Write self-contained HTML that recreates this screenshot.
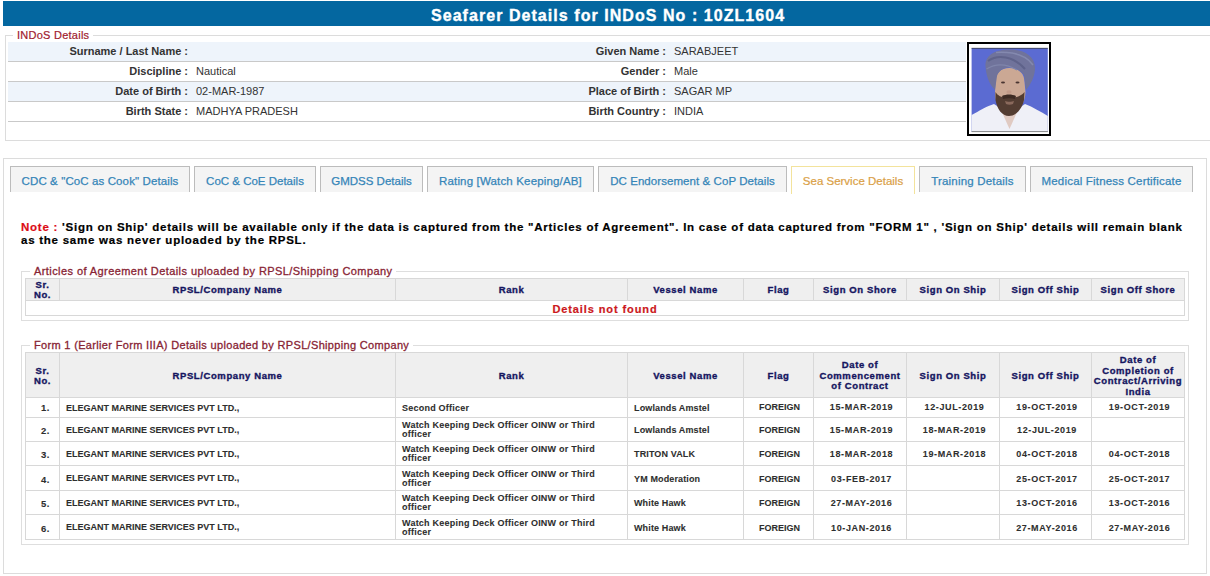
<!DOCTYPE html>
<html><head><meta charset="utf-8">
<style>
html,body{margin:0;padding:0;background:#fff;width:1210px;height:576px;overflow:hidden;position:relative;font-family:"Liberation Sans",sans-serif;}
.abs{position:absolute;}
#hdr{left:3px;top:1px;width:1207px;height:25px;background:#0467a0;}
#hdr span{position:absolute;left:428px;top:4.5px;color:#fff;font:bold 16px/20px "Liberation Sans",sans-serif;letter-spacing:1.05px;-webkit-text-stroke:0.35px #fff;white-space:nowrap;}
#fs1{left:5px;top:35px;width:1220px;height:104px;border:1px solid #dcdcdc;}
.leg{position:absolute;background:#fff;white-space:nowrap;}
#leg1{left:13px;top:29px;width:80px;height:12px;font:11px/12px "Liberation Sans",sans-serif;color:#a0202e;text-indent:4px;letter-spacing:0.25px;-webkit-text-stroke:0.2px #a0202e;}
.ir{position:absolute;left:8px;width:958px;height:19px;border-bottom:1px solid #c9c9c9;}
.ir.b{background:#eef4fb;}
.ir span{position:absolute;top:3px;font:11px/13px "Liberation Sans",sans-serif;color:#333;white-space:nowrap;}
.ir .l{font-weight:bold;text-align:right;}
.l1{right:778px;}
.v1{left:188px;}
.l2{right:300px;}
.v2{left:666px;}
#tabs{left:3px;top:158px;width:1202px;height:414px;border:1px solid #dcdcdc;}
.tab{position:absolute;top:166px;height:25px;box-sizing:content-box;padding-top:0;border:1px solid #bcbcbc;border-bottom:none;background:#f4f4f4;color:#3485b8;font:11.5px/29.5px "Liberation Sans",sans-serif;text-align:center;white-space:nowrap;-webkit-text-stroke:0.25px #3485b8;}
.tab.act{background:#fff;border-color:#f3e39c;color:#daa046;-webkit-text-stroke:0.2px #daa046;height:27px;}
#note{left:21px;top:221px;width:1170px;font:bold 11.5px/13px "Liberation Sans",sans-serif;letter-spacing:0.75px;color:#000;-webkit-text-stroke:0.2px #000;}
#note b{-webkit-text-stroke:0.2px #dc0c16;}
#note b{color:#dc0c16;}
.fs{position:absolute;left:21px;width:1166px;border:1px solid #dedede;}
.leg2{position:absolute;left:30px;background:#fff;padding:0 4px;font:11px/12px "Liberation Sans",sans-serif;color:#882434;white-space:nowrap;-webkit-text-stroke:0.3px #882434;}
table.g{position:absolute;left:25px;width:1159px;border-collapse:collapse;table-layout:fixed;}
table.g td,table.g th{border:1px solid #d8d8d8;padding:0;overflow:hidden;}
table.g th{background:#efefef;color:#15155f;font:bold 9.5px/10.75px "Liberation Sans",sans-serif;letter-spacing:0.6px;text-align:center;-webkit-text-stroke:0.35px #15155f;}
table.g th.pt{padding-top:2px}
table.g tr.fh th{padding-top:2px;line-height:10.6px}
table.g tr.m td.c,table.g tr.m td.r,table.g tr.m td.vs{padding-top:2px}
table.g td.r{text-align:right;padding-right:9px;letter-spacing:0.5px;font-size:9.5px}
table.g td.p{padding-left:6px;padding-top:1px}
table.g td.c{text-align:center}
table.g td{font:bold 9px/9px "Liberation Sans",sans-serif;color:#2e2e2e;-webkit-text-stroke:0.08px #2e2e2e;}
table.g td.c{letter-spacing:0.62px;padding-left:3px}
table.g td.f{letter-spacing:0;padding-left:2px}
table.g td.rk{letter-spacing:0.23px}
table.g td.vs{letter-spacing:0.13px}
</style></head><body>
<div id="hdr" class="abs"><span>Seafarer Details for INDoS No : 10ZL1604</span></div>

<div id="fs1" class="abs"></div>
<div id="leg1" class="leg">INDoS Details</div>
<div class="ir b" style="top:42px"><span class="l l1">Surname / Last Name :</span><span class="l l2">Given Name :</span><span class="v2">SARABJEET</span></div>
<div class="ir" style="top:62px"><span class="l l1">Discipline :</span><span class="v1">Nautical</span><span class="l l2">Gender :</span><span class="v2">Male</span></div>
<div class="ir b" style="top:82px"><span class="l l1">Date of Birth :</span><span class="v1">02-MAR-1987</span><span class="l l2">Place of Birth :</span><span class="v2">SAGAR MP</span></div>
<div class="ir" style="top:102px"><span class="l l1">Birth State :</span><span class="v1">MADHYA PRADESH</span><span class="l l2">Birth Country :</span><span class="v2">INDIA</span></div>
<svg id="photo" class="abs" width="84" height="94" viewBox="0 0 84 94" style="left:967px;top:42px">
<defs><filter id="bl" x="-10%" y="-10%" width="120%" height="120%"><feGaussianBlur stdDeviation="0.7"/></filter></defs>
<rect x="0" y="0" width="84" height="94" fill="#fff"/>
<rect x="1" y="1" width="82" height="92" fill="none" stroke="#000" stroke-width="2"/>
<rect x="4.6" y="6" width="76.2" height="84" fill="#5b6bd2"/>
<g filter="url(#bl)">
<path d="M4.6 73 C12 69 20 64 27 62 L33 66 L52 66 L58 62 C66 65 74 70 80.8 74 L80.8 90 L4.6 90 Z" fill="#eff0f7"/>
<path d="M34 68 L51 68 L42.5 87 Z" fill="#e0cac2"/>
<path d="M28.5 40 C28.5 31 34 26 42 26 C51 26 57.5 31 57.5 40 L58.5 50 C58 62 51 72 42 72 C34 72 28 62 28 50 Z" fill="#cba894"/>
<path d="M28.5 50 C31 54 35 56 42 55.5 C50 56 54 54 57.5 50 L57 58 C55 67 49 74 42 74 C35 74 30 67 28.5 58 Z" fill="#533c33"/>
<path d="M38 59 C40 60 45 60 47 59 L46 62 C44 63 41 63 39 62 Z" fill="#8a6a5c"/>
<path d="M35 54 C39 52 45 52 49 54 L48 57 C45 56 39 56 36 57 Z" fill="#3e2a24"/>
<ellipse cx="42" cy="50" rx="2.6" ry="1.7" fill="#c29a88"/>
<ellipse cx="36" cy="40.5" rx="2" ry="1.1" fill="#4a3430"/>
<ellipse cx="50.5" cy="40.5" rx="2" ry="1.1" fill="#4a3430"/>
<path d="M18.5 24 C18 13 28 7.4 43 7.4 C58 7.4 68.5 15 68 27 C67.5 35 64 42 59 48 L57 33 C53 28 48 25.5 42 25.5 C36 26 31.5 29 30 34 L28 48 C22 42 19 33 18.5 24 Z" fill="#6f739b"/>
<path d="M21 19 C31 12 46 14 58 27" stroke="#5e628a" stroke-width="2" fill="none"/>
<path d="M19.5 27 C29 21 40 22 50 28" stroke="#8085ab" stroke-width="1.3" fill="none"/>
<path d="M29 10.5 C45 9.5 59 13 66 23" stroke="#8489af" stroke-width="1.5" fill="none"/>
</g>
<line x1="4.6" y1="6.3" x2="80.8" y2="6.3" stroke="#333" stroke-width="0.7"/>
<line x1="4.6" y1="89.6" x2="80.8" y2="89.6" stroke="#555" stroke-width="0.7"/>
</svg>

<div id="tabs" class="abs"></div>
<div class="tab" style="left:10px;width:178px;letter-spacing:0.11px">CDC &amp; "CoC as Cook" Details</div>
<div class="tab" style="left:194px;width:120px">CoC &amp; CoE Details</div>
<div class="tab" style="left:320px;width:101px">GMDSS Details</div>
<div class="tab" style="left:427px;width:165px;letter-spacing:0.16px">Rating [Watch Keeping/AB]</div>
<div class="tab" style="left:598px;width:187px;letter-spacing:0.07px">DC Endorsement &amp; CoP Details</div>
<div class="tab act" style="left:791px;width:122px">Sea Service Details</div>
<div class="tab" style="left:919px;width:105px;letter-spacing:0.2px">Training Details</div>
<div class="tab" style="left:1030px;width:161px;letter-spacing:0.19px">Medical Fitness Certificate</div>

<div id="note" class="abs"><b>Note :</b> 'Sign on Ship' details will be available only if the data is captured from the "Articles of Agreement". In case of data captured from "FORM 1" , 'Sign on Ship' details will remain blank as the same was never uploaded by the RPSL.</div>

<div class="fs" style="top:271px;height:48px"></div>
<div class="leg2" style="top:265px;letter-spacing:0.42px">Articles of Agreement Details uploaded by RPSL/Shipping Company</div>
<table class="g" style="top:278px">
<colgroup><col style="width:34px"><col style="width:336px"><col style="width:232px"><col style="width:116px"><col style="width:70px"><col style="width:93px"><col style="width:93px"><col style="width:92px"><col style="width:93px"></colgroup>
<tr style="height:22px;line-height:10.4px"><th style="line-height:10px;padding-top:1px">Sr.<br>No.</th><th class="pt">RPSL/Company Name</th><th class="pt">Rank</th><th class="pt">Vessel Name</th><th class="pt">Flag</th><th class="pt">Sign On Shore</th><th class="pt">Sign On Ship</th><th class="pt">Sign Off Ship</th><th class="pt">Sign Off Shore</th></tr>
<tr style="height:15px"><td colspan="9" style="text-align:center;color:#cc1820;font:bold 11px/12px 'Liberation Sans',sans-serif;letter-spacing:0.9px;-webkit-text-stroke:0.2px #cc1820;padding-top:2px">Details not found</td></tr>
</table>

<div class="fs" style="top:345px;height:198px"></div>
<div class="leg2" style="top:339px;letter-spacing:0.33px">Form 1 (Earlier Form IIIA) Details uploaded by RPSL/Shipping Company</div>
<table class="g" style="top:352px">
<colgroup><col style="width:34px"><col style="width:336px"><col style="width:232px"><col style="width:116px"><col style="width:70px"><col style="width:93px"><col style="width:93px"><col style="width:92px"><col style="width:93px"></colgroup>
<tr class="fh" style="height:45px"><th>Sr.<br>No.</th><th>RPSL/Company Name</th><th>Rank</th><th>Vessel Name</th><th>Flag</th><th>Date of<br>Commencement<br>of Contract</th><th>Sign On Ship</th><th>Sign Off Ship</th><th>Date of<br>Completion of<br>Contract/Arriving<br>India</th></tr>
<tr style="height:20px"><td class="r">1.</td><td class="p">ELEGANT MARINE SERVICES PVT LTD.,</td><td class="p rk">Second Officer</td><td class="p vs">Lowlands Amstel</td><td class="c f">FOREIGN</td><td class="c">15-MAR-2019</td><td class="c">12-JUL-2019</td><td class="c">19-OCT-2019</td><td class="c">19-OCT-2019</td></tr>
<tr class="m" style="height:24px"><td class="r">2.</td><td class="p">ELEGANT MARINE SERVICES PVT LTD.,</td><td class="p rk">Watch Keeping Deck Officer OINW or Third<br>officer</td><td class="p vs">Lowlands Amstel</td><td class="c f">FOREIGN</td><td class="c">15-MAR-2019</td><td class="c">18-MAR-2019</td><td class="c">12-JUL-2019</td><td class="c"></td></tr>
<tr class="m" style="height:24px"><td class="r">3.</td><td class="p">ELEGANT MARINE SERVICES PVT LTD.,</td><td class="p rk">Watch Keeping Deck Officer OINW or Third<br>officer</td><td class="p vs">TRITON VALK</td><td class="c f">FOREIGN</td><td class="c">18-MAR-2018</td><td class="c">19-MAR-2018</td><td class="c">04-OCT-2018</td><td class="c">04-OCT-2018</td></tr>
<tr class="m" style="height:25px"><td class="r">4.</td><td class="p">ELEGANT MARINE SERVICES PVT LTD.,</td><td class="p rk">Watch Keeping Deck Officer OINW or Third<br>officer</td><td class="p vs">YM Moderation</td><td class="c f">FOREIGN</td><td class="c">03-FEB-2017</td><td class="c"></td><td class="c">25-OCT-2017</td><td class="c">25-OCT-2017</td></tr>
<tr class="m" style="height:24px"><td class="r">5.</td><td class="p">ELEGANT MARINE SERVICES PVT LTD.,</td><td class="p rk">Watch Keeping Deck Officer OINW or Third<br>officer</td><td class="p vs">White Hawk</td><td class="c f">FOREIGN</td><td class="c">27-MAY-2016</td><td class="c"></td><td class="c">13-OCT-2016</td><td class="c">13-OCT-2016</td></tr>
<tr class="m" style="height:25px"><td class="r">6.</td><td class="p">ELEGANT MARINE SERVICES PVT LTD.,</td><td class="p rk">Watch Keeping Deck Officer OINW or Third<br>officer</td><td class="p vs">White Hawk</td><td class="c f">FOREIGN</td><td class="c">10-JAN-2016</td><td class="c"></td><td class="c">27-MAY-2016</td><td class="c">27-MAY-2016</td></tr>
</table>

</body></html>
